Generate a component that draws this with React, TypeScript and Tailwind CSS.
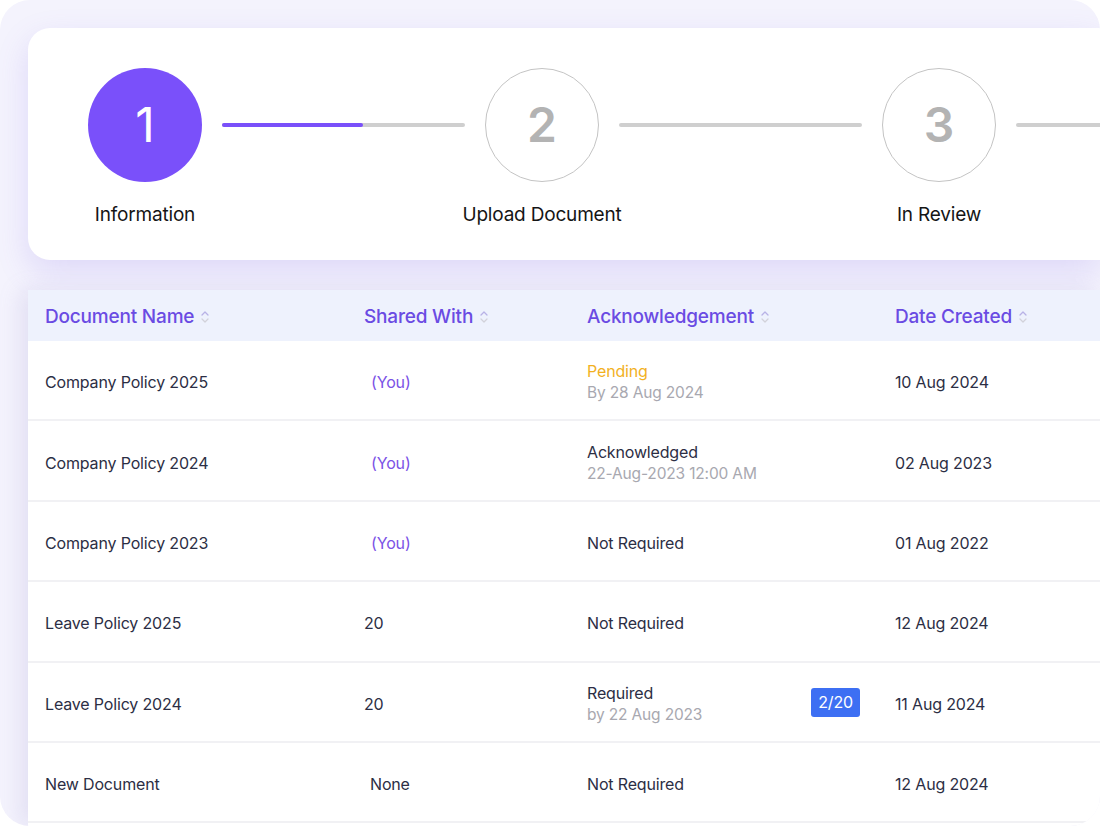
const font = { fontFamily: "Inter, 'Noto Sans', sans-serif" };

type Row = {
  name: string;
  shared: React.ReactNode;
  ack: React.ReactNode;
  date: string;
};

function SortIcon() {
  return (
    <svg width="10" height="16" viewBox="0 0 10 16" fill="none" className="ml-[6px]">
      <path d="M2 6l3-3 3 3" stroke="#b8b2e6" strokeWidth="1.3" strokeLinecap="round" strokeLinejoin="round" />
      <path d="M2 10l3 3 3-3" stroke="#d2d2da" strokeWidth="1.3" strokeLinecap="round" strokeLinejoin="round" />
    </svg>
  );
}

function Step({ n, label, active }: { n: string; label: string; active?: boolean }) {
  return (
    <div className="flex w-[114px] shrink-0 flex-col items-center">
      {active ? (
        <div className="flex h-[114px] w-[114px] items-center justify-center rounded-full bg-[#7a50fa] text-[48px] text-white">
          {n}
        </div>
      ) : (
        <div className="flex h-[114px] w-[114px] items-center justify-center rounded-full border border-[#c4c4c4] text-[48px] font-semibold text-[#b3b3b3]">
          {n}
        </div>
      )}
      <div className="mt-[19px] whitespace-nowrap text-[19px] tracking-[-0.01em] text-[#151515]">{label}</div>
    </div>
  );
}

function Line({ progress }: { progress?: number }) {
  return (
    <div className="mx-[20px] mt-[55px] h-[4px] w-[243px] shrink-0 rounded-full bg-[#cfcfcf]">
      {progress ? <div className="h-[4px] w-[141px] rounded-full bg-[#7a50fa]" /> : null}
    </div>
  );
}

const you = <span className="pl-[7px] text-[#7b52e6]">(You)</span>;

const rows: Row[] = [
  {
    name: "Company Policy 2025",
    shared: you,
    ack: (
      <div className="flex flex-col leading-[22px]">
        <span className="text-[#f2b11f]">Pending</span>
        <span className="text-[15.5px] text-[#a8a8b0]">By 28 Aug 2024</span>
      </div>
    ),
    date: "10 Aug 2024",
  },
  {
    name: "Company Policy 2024",
    shared: you,
    ack: (
      <div className="flex flex-col leading-[22px]">
        <span>Acknowledged</span>
        <span className="text-[15.5px] text-[#a8a8b0]">22-Aug-2023 12:00 AM</span>
      </div>
    ),
    date: "02 Aug 2023",
  },
  { name: "Company Policy 2023", shared: you, ack: "Not Required", date: "01 Aug 2022" },
  { name: "Leave Policy 2025", shared: "20", ack: "Not Required", date: "12 Aug 2024" },
  {
    name: "Leave Policy 2024",
    shared: "20",
    ack: (
      <div className="flex w-full items-center pr-[35px]">
        <div className="flex flex-col leading-[22px]">
          <span>Required</span>
          <span className="text-[15.5px] text-[#a8a8b0]">by 22 Aug 2023</span>
        </div>
        <span className="ml-auto mb-[2px] rounded-[3px] bg-[#3d6ff3] px-[7px] py-[3px] text-[16px] leading-[23px] text-white">
          2/20
        </span>
      </div>
    ),
    date: "11 Aug 2024",
  },
  { name: "New Document", shared: <span className="pl-[6px]">None</span>, ack: "Not Required", date: "12 Aug 2024" },
];

export default function App() {
  return (
    <div className="h-[826px] w-[1100px] bg-white" style={font}>
      <div className="flex h-[826px] w-[1100px] flex-col overflow-hidden rounded-[30px] bg-[#f4f3fd] pl-[28px] pt-[28px]">
        <div className="flex h-[232px] shrink-0 items-start rounded-l-[22px] bg-white pl-[60px] pt-[40px] shadow-[0_12px_32px_rgba(120,96,230,0.18)]">
          <Step n="1" label="Information" active />
          <Line progress={141} />
          <Step n="2" label="Upload Document" />
          <Line />
          <Step n="3" label="In Review" />
          <Line />
        </div>

        <div className="mt-[30px] flex-1 bg-white shadow-[-8px_0_20px_rgba(150,140,200,0.18)]">
          <div className="grid h-[51px] grid-cols-[319px_223px_308px_1fr] items-center bg-[#eef2fd] pl-[17px] pt-[3px] text-[19px] font-medium tracking-[-0.01em] text-[#6a4be3]">
            <div className="flex items-center">Document Name<SortIcon /></div>
            <div className="flex items-center">Shared With<SortIcon /></div>
            <div className="flex items-center">Acknowledgement<SortIcon /></div>
            <div className="flex items-center">Date Created<SortIcon /></div>
          </div>
          {rows.map((r) => (
            <div
              key={r.name}
              className="grid h-[80.4px] grid-cols-[319px_223px_308px_1fr] items-center border-b-2 border-[#f1f1f4] pl-[17px] pt-[4px] text-[16px] tracking-[-0.01em] text-[#2c2e44]"
            >
              <div>{r.name}</div>
              <div>{r.shared}</div>
              <div className="flex items-center">{r.ack}</div>
              <div>{r.date}</div>
            </div>
          ))}
        </div>
      </div>
    </div>
  );
}
